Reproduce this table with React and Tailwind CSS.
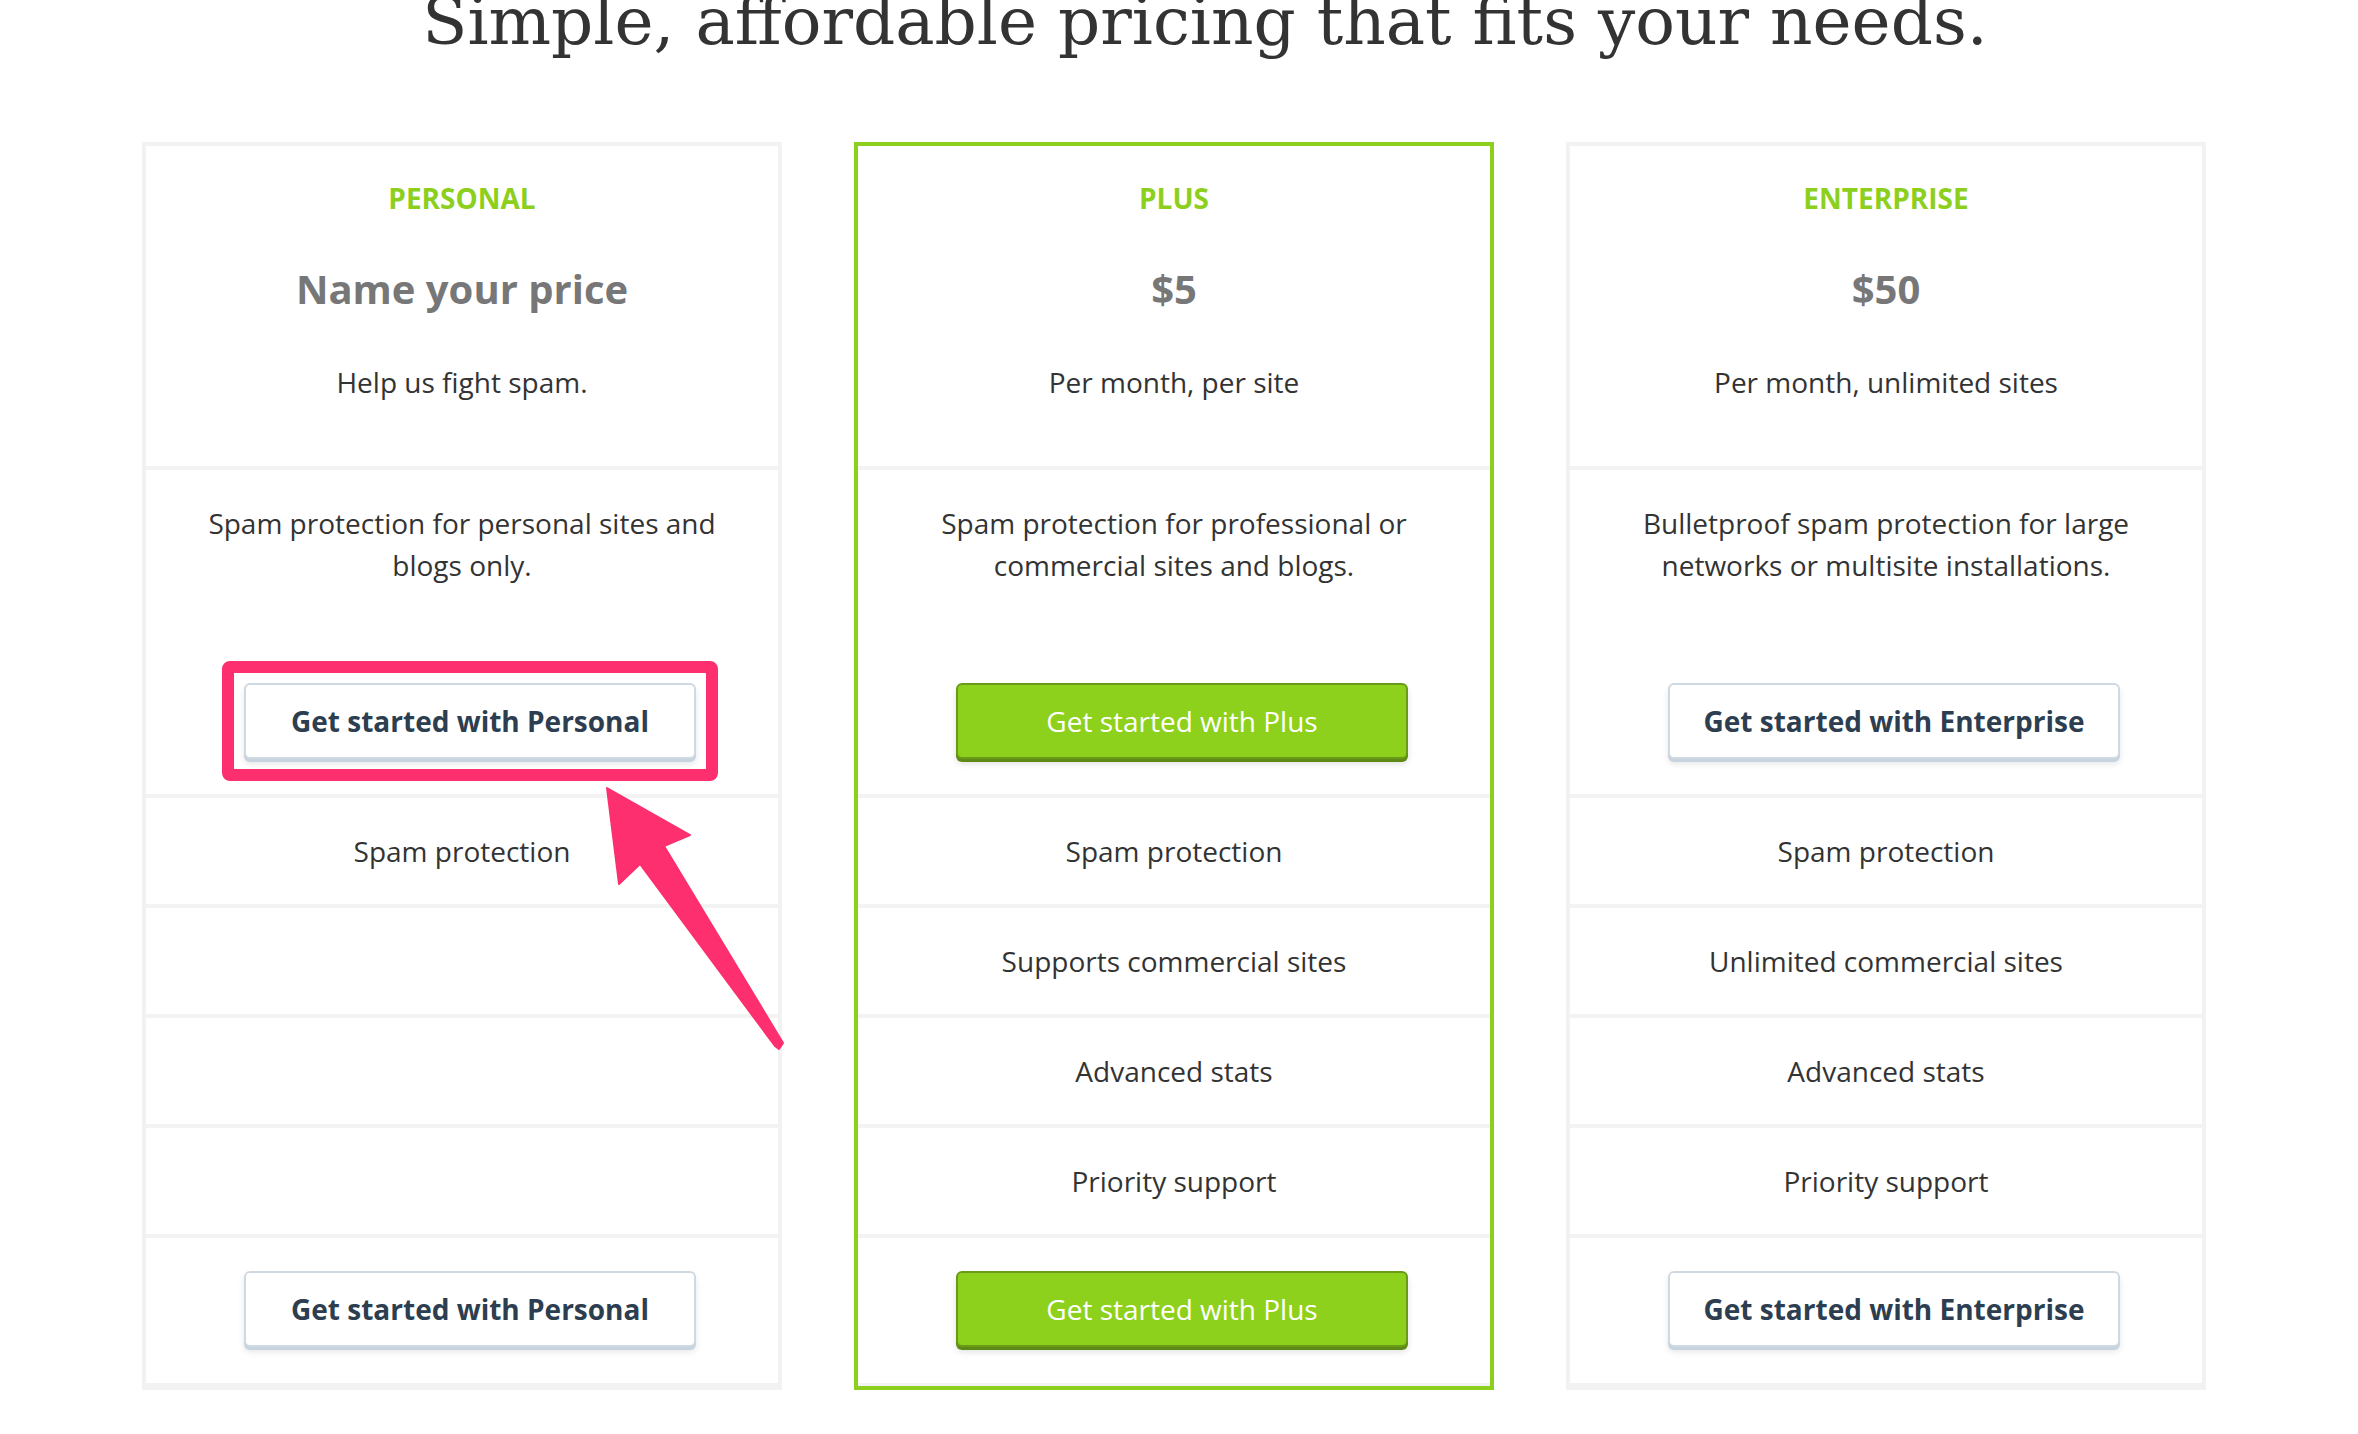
import React from "react";

const plans = [
  {
    name: "PERSONAL",
    price: "Name your price",
    sub: "Help us fight spam.",
    desc: ["Spam protection for personal sites and", "blogs only."],
    features: ["Spam protection", "", "", ""],
    cta: "Get started with Personal",
    featured: false,
    highlight: true,
  },
  {
    name: "PLUS",
    price: "$5",
    sub: "Per month, per site",
    desc: ["Spam protection for professional or", "commercial sites and blogs."],
    features: ["Spam protection", "Supports commercial sites", "Advanced stats", "Priority support"],
    cta: "Get started with Plus",
    featured: true,
  },
  {
    name: "ENTERPRISE",
    price: "$50",
    sub: "Per month, unlimited sites",
    desc: ["Bulletproof spam protection for large", "networks or multisite installations."],
    features: ["Spam protection", "Unlimited commercial sites", "Advanced stats", "Priority support"],
    cta: "Get started with Enterprise",
    featured: false,
  },
];

const CtaButton = ({ plan, highlight }) => {
  return (
    <div className="relative ml-[16px]">
      {highlight && (
        <div className="absolute -inset-[22px] border-[12px] border-[#fd2f6e] rounded-[8px] pointer-events-none" />
      )}
      {plan.featured ? (
        <button className="w-[452px] h-[76px] rounded-[6px] border-2 border-[#6a9b18] bg-[#8dd11c] text-white text-[28px] shadow-[0_3px_0_#5d8a14,0_5px_6px_rgba(0,0,0,0.12)]">
          {plan.cta}
        </button>
      ) : (
        <button className="w-[452px] h-[76px] rounded-[6px] border-2 border-[#cfd9e2] bg-white text-[#2c3e50] font-bold text-[28px] shadow-[0_3px_0_#c7d3de,0_5px_6px_rgba(0,0,0,0.10)]">
          {plan.cta}
        </button>
      )}
    </div>
  );
};

const PlanCard = ({ plan }) => {
  return (
    <div
      className={
        plan.featured
          ? "w-[640px] border-4 border-[#8ccf1c] flex flex-col"
          : "w-[640px] border-4 border-[#f2f2f2] flex flex-col"
      }
    >
      <div className="h-[324px] border-b-4 border-[#f3f3f3] flex flex-col items-center pt-[32px]">
        <p className="text-[28px] leading-[40px] font-bold text-[#8ccf1c]">{plan.name}</p>
        <p className="mt-[45px] text-[40px] leading-[52px] font-bold text-[#777777]">{plan.price}</p>
        <p className="mt-[46px] text-[28px] leading-[42px] text-[#333333]">{plan.sub}</p>
      </div>
      <div className="h-[328px] border-b-4 border-[#f3f3f3] flex flex-col items-center pt-[32px]">
        <p className="text-[28px] leading-[42px] text-[#333333] text-center">
          {plan.desc[0]}
          <br />
          {plan.desc[1]}
        </p>
        <div className="mt-[97px]">
          <CtaButton plan={plan} highlight={plan.highlight} />
        </div>
      </div>
      {plan.features.map((f, i) => (
        <div
          key={i}
          className="h-[110px] border-b-4 border-[#f3f3f3] flex items-center justify-center"
        >
          <p className="text-[28px] leading-[42px] text-[#333333]">{f}</p>
        </div>
      ))}
      <div className="h-[148px] border-b-[3px] border-[#f3f3f3] flex flex-col items-center pt-[33px]">
        <CtaButton plan={plan} />
      </div>
    </div>
  );
};

export default function App() {
  return (
    <div className="relative w-[2358px] h-[1434px] overflow-hidden bg-white font-['Open_Sans',sans-serif]">
      <h1 className="h-[54px] pl-[52px] text-center text-[66px] leading-[44px] text-[#333333] font-['DejaVu_Serif',serif] whitespace-nowrap">
        Simple, affordable pricing that fits your needs.
      </h1>
      <div className="mt-[88px] ml-[142px] flex gap-[72px]">
        {plans.map((p) => (
          <PlanCard key={p.name} plan={p} />
        ))}
      </div>
      {/* annotation arrow */}
      <svg
        className="absolute left-0 top-0 pointer-events-none"
        width="2358"
        height="1434"
        viewBox="0 0 2358 1434"
      >
        <polygon
          points="607,788 690,835 664,846 783,1043 779,1049 775,1046 640,864 619,884"
          fill="#fd2f6e"
          stroke="#fd2f6e"
          strokeWidth="2"
          strokeLinejoin="round"
        />
      </svg>
    </div>
  );
}
